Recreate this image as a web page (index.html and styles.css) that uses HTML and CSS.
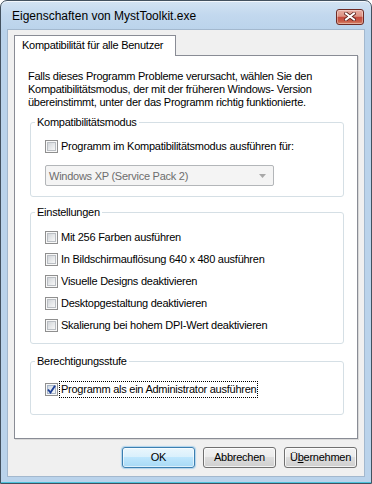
FILE: index.html
```html
<!DOCTYPE html>
<html lang="de">
<head>
<meta charset="utf-8">
<title>Eigenschaften von MystToolkit.exe</title>
<link rel="stylesheet" href="styles.css">
</head>
<body>
<div class="window">
  <div class="titlebar">
    <span class="title">Eigenschaften von MystToolkit.exe</span>
    <div class="close">
      <svg width="12" height="9" viewBox="0 0 12 9">
        <path d="M2 1.5 L10 7.5 M10 1.5 L2 7.5" stroke="#5a1f1a" stroke-width="3.6" stroke-linecap="square" fill="none"/>
        <path d="M2 1.5 L10 7.5 M10 1.5 L2 7.5" stroke="#ffffff" stroke-width="2" stroke-linecap="square" fill="none"/>
      </svg>
    </div>
  </div>
  <div class="client">
    <div class="tabs">
      <div class="tab">Kompatibilität für alle Benutzer</div>
    </div>
    <div class="panel">
      <p class="intro">Falls dieses Programm Probleme verursacht, wählen Sie den<br>Kompatibilitätsmodus, der mit der früheren Windows- Version<br>übereinstimmt, unter der das Programm richtig funktionierte.</p>

      <div class="group g1">
        <div class="legend">Kompatibilitätsmodus</div>
        <div class="row first"><span class="cb"><i></i></span><span class="lbl">Programm im Kompatibilitätsmodus ausführen für:</span></div>
        <div class="select">
          <span>Windows XP (Service Pack 2)</span>
          <svg width="7" height="4" viewBox="0 0 7 4"><path d="M0 0 H7 L3.5 4 Z" fill="#a8a8a8"/></svg>
        </div>
      </div>

      <div class="group g2">
        <div class="legend">Einstellungen</div>
        <div class="rows">
          <div class="row"><span class="cb"><i></i></span><span class="lbl">Mit 256 Farben ausführen</span></div>
          <div class="row"><span class="cb"><i></i></span><span class="lbl">In Bildschirmauflösung 640 x 480 ausführen</span></div>
          <div class="row"><span class="cb"><i></i></span><span class="lbl">Visuelle Designs deaktivieren</span></div>
          <div class="row"><span class="cb"><i></i></span><span class="lbl">Desktopgestaltung deaktivieren</span></div>
          <div class="row"><span class="cb"><i></i></span><span class="lbl">Skalierung bei hohem DPI-Wert deaktivieren</span></div>
        </div>
      </div>

      <div class="group g3">
        <div class="legend">Berechtigungsstufe</div>
        <div class="row admin">
          <span class="cb checked"><i></i>
            <svg class="tick" width="9" height="9" viewBox="0 0 9 9"><path d="M1 4.5 L3.5 7.5 L8 0.8" stroke="#1d3f96" stroke-width="1.9" fill="none"/></svg>
          </span>
          <span class="lbl focus">Programm als ein Administrator ausführen</span>
        </div>
      </div>
    </div>
    <div class="buttons">
      <button class="btn default">OK</button>
      <button class="btn">Abbrechen</button>
      <button class="btn">Ü<u>b</u>ernehmen</button>
    </div>
  </div>
</div>
</body>
</html>
```
FILE: styles.css
```css
html, body {
  margin: 0;
  padding: 0;
  background: #ffffff;
}

body {
  font-family: "Liberation Sans", Arial, sans-serif;
  font-size: 11px;
  letter-spacing: -0.25px;
  color: #000;
}

.window {
  width: 372px;
  height: 484px;
  box-sizing: border-box;
  border: 1px solid #43515f;
  border-radius: 7px 7px 0 0;
  background: linear-gradient(to bottom, #d3e3f3 0px, #c2d8ee 14px, #bad3eb 30px, #bad3eb 100%);
  box-shadow: inset 0 1px 0 rgba(255,255,255,0.7), inset 0 -1px 0 #4cc3dc;
  padding: 0 6px 6px 6px;
  display: flex;
  flex-direction: column;
}

.titlebar {
  height: 28px;
  display: flex;
  align-items: center;
  justify-content: space-between;
  padding: 0 1px 0 5px;
}

.title {
  font-size: 12px;
  letter-spacing: 0;
  color: #000;
  margin-top: 2px;
}

.close {
  width: 28px;
  height: 16px;
  box-sizing: border-box;
  margin-top: 3px;
  border: 1px solid #6e2a24;
  border-radius: 3px;
  background: linear-gradient(to bottom, #e8ada2 0%, #dc9283 45%, #c44a3d 52%, #c85c48 80%, #d98a6e 100%);
  box-shadow: inset 0 0 0 1px rgba(255,255,255,0.35);
  display: flex;
  align-items: center;
  justify-content: center;
}

.client {
  flex: 1;
  background: #f0f0f0;
  border: 1px solid #a3b8ce;
  padding: 5px 6px 0 6px;
  display: flex;
  flex-direction: column;
}

.tabs {
  display: flex;
  position: relative;
  z-index: 1;
}

.tab {
  width: 162px;
  height: 21px;
  box-sizing: border-box;
  border: 1px solid #898c95;
  border-bottom: none;
  background: #ffffff;
  padding-left: 7px;
  line-height: 19px;
  margin-bottom: -1px;
}

.panel {
  height: 384px;
  box-sizing: border-box;
  border: 1px solid #898c95;
  background: #ffffff;
  box-shadow: 1px 1px 0 #d8d8d8;
  padding: 14px 13px 0 15px;
  display: flex;
  flex-direction: column;
}

.intro {
  margin: 0 0 0 -2px;
  line-height: 13px;
}

.group {
  border: 1px solid #d5dfe5;
  border-radius: 3px;
  padding: 0 0 0 14px;
  display: flex;
  flex-direction: column;
}

.legend {
  align-self: flex-start;
  margin: -7px 0 0 -10px;
  padding: 0 2px;
  background: #ffffff;
  line-height: 13px;
}

.g1 {
  margin-top: 13px;
  padding-bottom: 10px;
}

.g2 {
  margin-top: 15px;
  padding-bottom: 7px;
}

.g3 {
  margin-top: 17px;
  padding-bottom: 16px;
}

.row {
  display: flex;
  align-items: center;
  height: 22px;
}

.row.first {
  height: 13px;
  margin-top: 11px;
}

.rows {
  margin-top: 7px;
  display: flex;
  flex-direction: column;
}

.row.admin {
  height: 17px;
  margin-top: 13px;
}

.cb {
  width: 13px;
  height: 13px;
  box-sizing: border-box;
  border: 1px solid #8f8f8f;
  background: #f8f8f8;
  padding: 1px;
  flex: none;
  position: relative;
}

.cb i {
  display: block;
  width: 9px;
  height: 9px;
  box-sizing: border-box;
  border: 1px solid #babec3;
  background: linear-gradient(135deg, #d2d5d9 0%, #e5e7e9 50%, #f7f7f7 100%);
}

.cb.checked i {
  border-color: #a8b6c8;
  background: linear-gradient(135deg, #cfd8e4 0%, #e6ebf1 50%, #f6f7f9 100%);
}

.tick {
  position: absolute;
  left: 1px;
  top: 1px;
}

.lbl {
  margin-left: 3px;
  line-height: 13px;
  white-space: nowrap;
}

.lbl.focus {
  margin-left: 1px;
  padding: 1px 1px;
  border: 1px dotted #000;
  line-height: 13px;
}

.select {
  margin-top: 12px;
  width: 229px;
  height: 21px;
  box-sizing: border-box;
  border: 1px solid #b3b6b9;
  border-radius: 2px;
  background: #f4f4f4;
  color: #6d6d6d;
  display: flex;
  align-items: center;
  justify-content: space-between;
  padding: 0 7px 0 3px;
}

.buttons {
  display: flex;
  justify-content: flex-end;
  gap: 8px;
  margin-top: 8px;
  margin-right: 1px;
}

.btn {
  width: 73px;
  height: 21px;
  box-sizing: border-box;
  border: 1px solid #707070;
  border-radius: 3px;
  background: linear-gradient(to bottom, #f2f2f2 0%, #ebebeb 49%, #dddddd 50%, #cfcfcf 100%);
  box-shadow: inset 0 0 0 1px rgba(255,255,255,0.75);
  font-family: "Liberation Sans", Arial, sans-serif;
  font-size: 11px;
  letter-spacing: -0.25px;
  color: #000;
  padding: 0;
  line-height: 17px;
}

.btn.default {
  border-color: #3c7fb1;
  background: linear-gradient(to bottom, #eaf6fd 0%, #d9f0fc 49%, #bee6fd 50%, #a7d9f5 100%);
  box-shadow: inset 0 0 0 1px rgba(255,255,255,0.6), 0 0 1px 1px rgba(60,160,230,0.35);
}

.btn u {
  text-decoration: underline;
  text-underline-offset: 1px;
}
```
